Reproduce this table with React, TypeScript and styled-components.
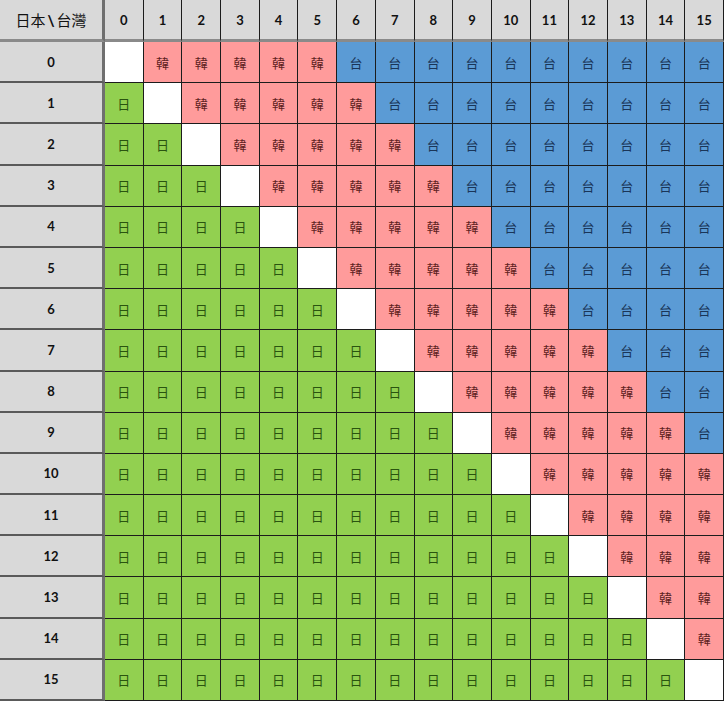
import React from "react";
import styled, { createGlobalStyle, css } from "styled-components";

const Global = createGlobalStyle`
  html, body { margin: 0; padding: 0; background: #ffffff; }
  body { font-family: "Lato", "Noto Sans CJK TC", sans-serif; }
`;

const Table = styled.div`
  display: grid;
  grid-template-columns: 105px repeat(16, 1fr);
  grid-template-rows: 42px repeat(16, 1fr);
  width: 724px;
  height: 701px;
`;

type Kind = "none" | "jp" | "kr" | "tw";

const palette: Record<Kind, { bg: string; fg: string }> = {
  none: { bg: "#ffffff", fg: "#000" },
  jp: { bg: "#92d050", fg: "#2a5410" },
  kr: { bg: "#ff9b9b", fg: "#5e2222" },
  tw: { bg: "#5b9bd5", fg: "#1a3558" },
};

const Base = styled.div`
  box-sizing: border-box;
  display: flex;
  align-items: center;
  justify-content: center;
  border-right: 1px solid #1c1c1c;
  border-bottom: 1px solid #1c1c1c;
  min-width: 0;
  min-height: 0;
`;

const HeaderCell = styled(Base)<{ $corner?: boolean; $rowLabel?: boolean }>`
  background: #d9d9d9;
  color: #111;
  font-family: "Lato", "Noto Sans CJK TC", sans-serif;
  font-weight: 700;
  font-size: 13px;
  ${(p) =>
    !p.$rowLabel &&
    css`
      border-bottom: 3px solid #8a8a8a;
    `}
  ${(p) =>
    (p.$rowLabel || p.$corner) &&
    css`
      border-right: 3px solid #6f6f6f;
      border-bottom-color: #5a5a5a;
      border-bottom-width: 2px;
    `}
  ${(p) =>
    p.$corner &&
    css`
      border-bottom: 3px solid #8a8a8a;
      font-size: 15px;
      font-weight: 400;
      font-family: "Noto Sans CJK TC", sans-serif;
      gap: 2px;
    `}
`;

const Slash = styled.span`
  font-family: "Lato", sans-serif;
  font-weight: 900;
  font-size: 15px;
`;

const DataCell = styled(Base)<{ $kind: Kind }>`
  background: ${(p) => palette[p.$kind].bg};
  color: ${(p) => palette[p.$kind].fg};
  font-family: "Noto Sans CJK TC", sans-serif;
  font-weight: 400;
  font-size: 13px;
`;

const labels: Record<Kind, string> = { none: "", jp: "日", kr: "韓", tw: "台" };

const kindOf = (r: number, c: number): Kind => {
  if (r === c) return "none";
  if (c < r) return "jp";
  if (c <= r + 5) return "kr";
  return "tw";
};

const idx = Array.from({ length: 16 }, (_, i) => i);

export default function App() {
  return (
    <>
      <Global />
      <Table>
        <HeaderCell $corner>
          <span>日本</span>
          <Slash>\</Slash>
          <span>台灣</span>
        </HeaderCell>
        {idx.map((c) => (
          <HeaderCell key={`h${c}`}>{c}</HeaderCell>
        ))}
        {idx.map((r) => (
          <React.Fragment key={`r${r}`}>
            <HeaderCell $rowLabel>{r}</HeaderCell>
            {idx.map((c) => {
              const k = kindOf(r, c);
              return (
                <DataCell key={`${r}-${c}`} $kind={k}>
                  {labels[k]}
                </DataCell>
              );
            })}
          </React.Fragment>
        ))}
      </Table>
    </>
  );
}
